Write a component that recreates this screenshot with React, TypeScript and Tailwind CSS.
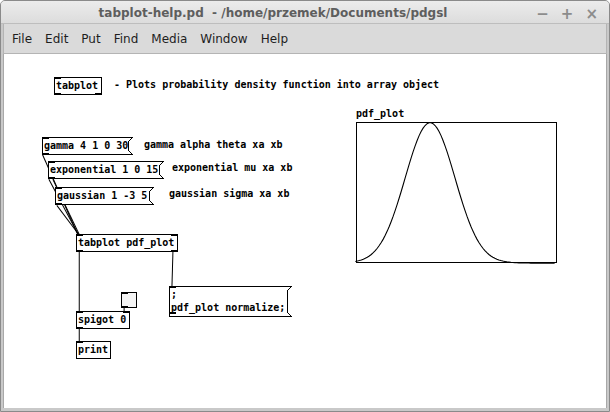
import React from "react";

/* Pd patch window: tabplot-help.pd */

type Io = "l" | "r";

function Iolets({ ins = [], outs = [] }: { ins?: Io[]; outs?: Io[] }) {
  return (
    <>
      {ins.map((s, i) => (
        <span
          key={"i" + i}
          className={`absolute top-[-1px] h-[2px] w-[7px] bg-black ${s === "l" ? "left-[-1px]" : "right-[-1px]"}`}
        />
      ))}
      {outs.map((s, i) => (
        <span
          key={"o" + i}
          className={`absolute bottom-[-1px] h-[2px] w-[7px] bg-black ${s === "l" ? "left-[-1px]" : "right-[-1px]"}`}
        />
      ))}
    </>
  );
}

function Obj({ pos, text, ins, outs }: { pos: string; text: string; ins?: Io[]; outs?: Io[] }) {
  return (
    <div className={`absolute h-[18px] border border-black bg-white pl-[1px] leading-[16px] whitespace-pre ${pos}`}>
      {text}
      <Iolets ins={ins} outs={outs} />
    </div>
  );
}

function Msg({ pos, w, h = 18, lines }: { pos: string; w: number; h?: number; lines: string[] }) {
  return (
    <div className={`absolute whitespace-pre ${pos}`}>
      <svg width={w} height={h} className="absolute left-0 top-0" shapeRendering="crispEdges">
        <polygon
          points={`0.5,0.5 ${w - 0.5},0.5 ${w - 4.5},4.5 ${w - 4.5},${h - 4.5} ${w - 0.5},${h - 0.5} 0.5,${h - 0.5}`}
          fill="white"
          stroke="black"
        />
      </svg>
      <div className={`relative pl-[2px] ${lines.length > 1 ? "pt-[2px] leading-[13px]" : "leading-[18px]"}`}>
        {lines.map((l, i) => (
          <div key={i}>{l}</div>
        ))}
      </div>
      <span className="absolute left-0 top-0 h-[2px] w-[7px] bg-black" />
      <span className="absolute bottom-0 left-0 h-[2px] w-[7px] bg-black" />
    </div>
  );
}

const curve = (() => {
  const pts: string[] = [];
  const n = 100;
  for (let i = 0; i <= n; i++) {
    const x = -3 + (8 * i) / n;
    const y = Math.exp((-x * x) / 2);
    pts.push(`${(355.5 + (200 * i) / n).toFixed(1)},${(263.5 - y * 140).toFixed(1)}`);
  }
  return pts.join(" ");
})();

export default function App() {
  return (
    <div className="flex h-[412px] w-[610px] flex-col overflow-hidden rounded-t-[5px] border border-[#8a8a8a] bg-[#c9c9c9] font-['DejaVu_Sans',sans-serif]">
      {/* Title bar */}
      <div className="relative flex h-[23px] shrink-0 items-center justify-center border-b border-[#bdbdbd] bg-gradient-to-b from-[#ececec] to-[#dcdcdc] pr-[64px] pt-[2px]">
        <span className="text-[12px] font-bold text-[#5e5e5e] whitespace-pre">
          tabplot-help.pd  - /home/przemek/Documents/pdgsl
        </span>
        <div className="absolute right-[11px] top-[5px] flex items-center gap-[12px] text-[15px] font-bold leading-[16px] text-[#8c8c8c]">
          <span>−</span>
          <span>+</span>
          <span>×</span>
        </div>
      </div>

      <div className="flex flex-1 flex-col px-[2px] pb-[3px]">
        {/* Menu bar */}
        <div className="flex h-[30px] shrink-0 items-center gap-[13px] border-x border-b border-[#b4b4b4] bg-[#dadada] pl-[8px] pt-[1px] text-[12px] text-[#1e1e1e]">
          <span>File</span>
          <span>Edit</span>
          <span>Put</span>
          <span>Find</span>
          <span>Media</span>
          <span>Window</span>
          <span>Help</span>
        </div>

        {/* Canvas */}
        <div className="relative flex-1 border-x border-[#a8a8a8] bg-white font-['DejaVu_Sans_Mono',monospace] text-[10px] font-bold text-black">
          <svg
            className="absolute inset-0 h-full w-full"
            viewBox="3 55 604 353"
            preserveAspectRatio="none"
            fill="none"
            stroke="black"
          >
            <line x1="41.5" y1="155" x2="77" y2="235" />
            <line x1="48" y1="180" x2="77.5" y2="235" />
            <line x1="52" y1="180" x2="78.5" y2="235" />
            <line x1="56" y1="206" x2="78" y2="235" />
            <line x1="78.5" y1="252" x2="78.5" y2="312" />
            <line x1="172.5" y1="252" x2="171.5" y2="287" />
            <line x1="123.5" y1="308" x2="123.5" y2="312" />
            <line x1="78.5" y1="329" x2="78.5" y2="342" />
            <polyline points={curve} strokeWidth="1.1" />
          </svg>

          <Obj pos="left-[50px] top-[23px] w-[48px]" text="tabplot" ins={["l"]} outs={["l", "r"]} />
          <div className="absolute left-[110px] top-[23px] leading-[16px] whitespace-pre">
            - Plots probability density function into array object
          </div>

          <Msg pos="left-[38px] top-[83px]" w={91} lines={["gamma 4 1 0 30"]} />
          <div className="absolute left-[140px] top-[83px] leading-[16px]">gamma alpha theta xa xb</div>

          <Msg pos="left-[44px] top-[107px]" w={116} lines={["exponential 1 0 15"]} />
          <div className="absolute left-[168px] top-[106px] leading-[16px]">exponential mu xa xb</div>

          <Msg pos="left-[51px] top-[133px]" w={99} lines={["gaussian 1 -3 5"]} />
          <div className="absolute left-[165px] top-[132px] leading-[16px]">gaussian sigma xa xb</div>

          <Obj pos="left-[72px] top-[180px] w-[102px]" text="tabplot pdf_plot" ins={["l", "r"]} outs={["l", "r"]} />

          <Msg pos="left-[165px] top-[232px]" w={123} h={31} lines={[";", "pdf_plot normalize;"]} />

          {/* toggle */}
          <div className="absolute left-[117px] top-[238px] h-[16px] w-[16px] border border-black bg-[#f4f4f4]">
            <Iolets ins={["l"]} outs={["l"]} />
          </div>

          <Obj pos="left-[72px] top-[257px] w-[54px]" text="spigot 0" ins={["l", "r"]} outs={["l"]} />
          <Obj pos="left-[72px] top-[287px] w-[35px]" text="print" ins={["l"]} />

          {/* array graph */}
          <div className="absolute left-[352px] top-[52px] leading-[16px]">pdf_plot</div>
          <div className="absolute left-[352px] top-[68px] h-[141px] w-[201px] border border-black" />
        </div>
      </div>
    </div>
  );
}
